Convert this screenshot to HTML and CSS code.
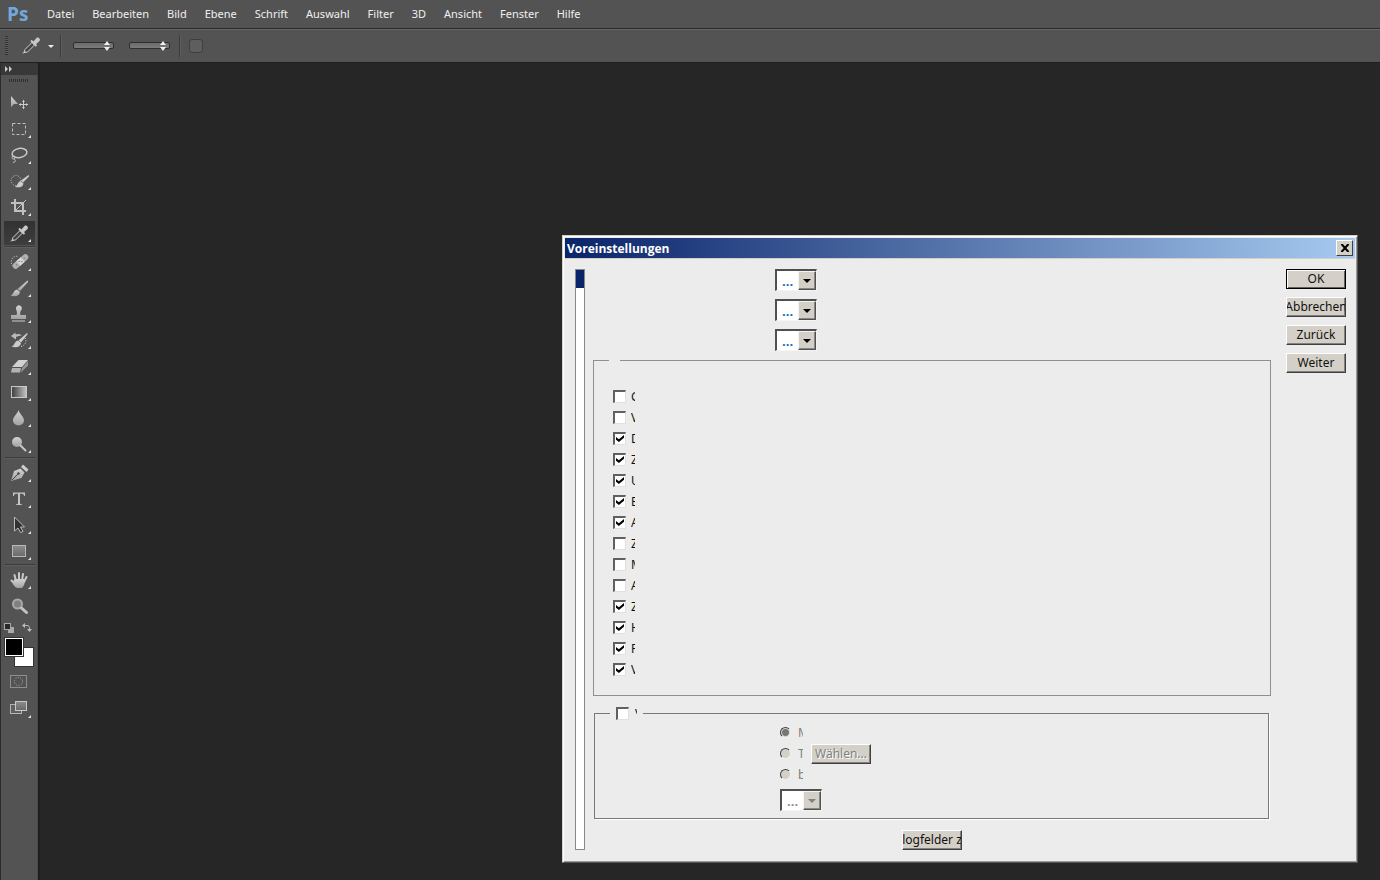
FILE: index.html
```html
<!DOCTYPE html>
<html lang="de">
<head>
<meta charset="utf-8">
<title>Voreinstellungen</title>
<link rel="stylesheet" href="styles.css">
</head>
<body>
<svg class="defs" aria-hidden="true">
  <defs>
    <linearGradient id="metal" x1="0" y1="0" x2="0" y2="1"><stop offset="0" stop-color="#d2d2d2"/><stop offset="1" stop-color="#a2a2a2"/></linearGradient>
    <linearGradient id="ramp"><stop offset="0" stop-color="#3c3c3c"/><stop offset="1" stop-color="#c4c4c4"/></linearGradient>
    <linearGradient id="plate" x1="0" y1="0" x2="0" y2="1"><stop offset="0" stop-color="#8c8c8c"/><stop offset="1" stop-color="#6a6a6a"/></linearGradient>
    <path id="corner" d="M29 19v3h-3z" fill="#e4e4e4"/>
    <g id="dropper">
      <path d="M10 20.500l1-3 7-7 2.500 2.500-7 7z" fill="#444" stroke="#d0d0d0"/>
      <path d="M17 8.500l5.500 5.500" stroke="#c8c8c8" stroke-width="2"/>
      <path d="M18.500 10.500l4-4.500c1.500-1.500 4.500 1 3 3l-4.500 4z" fill="#c8c8c8"/>
      <path d="M9 21.500l2-2" stroke="#ddd"/>
    </g>
    <g id="brush">
      <path d="M25.500 5.500c1 .8.500 1.500 0 2l-7.500 8.500-2.500-2z" fill="url(#metal)"/>
      <path d="M15 14.500l3 2.500c-.5 4-5 5-9.500 3.500 3-.5 3-5.500 6.500-6z" fill="url(#metal)"/>
    </g>
  </defs>
</svg>

<header class="menubar">
  <span class="logo">Ps</span>
  <nav class="menus">
    <button>Datei</button><button>Bearbeiten</button><button>Bild</button><button>Ebene</button><button>Schrift</button><button>Auswahl</button><button>Filter</button><button>3D</button><button>Ansicht</button><button>Fenster</button><button>Hilfe</button>
  </nav>
</header>

<div class="options">
  <span class="grip"></span>
  <button class="preset" aria-label="Pipette">
    <svg width="36" height="26" viewBox="0 0 36 26"><use href="#dropper" transform="translate(-5 -1)"/><path d="M29 12h6l-3 3z" fill="#eee"/></svg>
  </button>
  <span class="divider"></span>
  <span class="slot"><select aria-label="Aufnahmebereich"><option></option></select><svg width="6" height="10" viewBox="0 0 6 10"><path d="M0 4l3-4 3 4zM0 6l3 4 3-4z" fill="#eee"/></svg></span>
  <span class="slot"><select aria-label="Aufnehmen"><option></option></select><svg width="6" height="10" viewBox="0 0 6 10"><path d="M0 4l3-4 3 4zM0 6l3 4 3-4z" fill="#eee"/></svg></span>
  <span class="divider"></span>
  <input class="ring" type="checkbox" aria-label="Auswahlring anzeigen">
</div>

<div class="workspace">
  <aside class="tools">
    <button class="collapse" aria-label="Erweitern"><svg width="10" height="6" viewBox="0 0 10 6"><path d="M1 0l3 3-3 3zM5 0l3 3-3 3z" fill="#ccc"/></svg></button>
    <div class="toolgrip"></div>

    <button class="tool" aria-label="Verschieben"><svg viewBox="0 0 36 26"><path d="M9 6v11l3-3h4z" fill="url(#metal)"/><path d="M21.500 10v9M17 14.500h9" stroke="#ccc"/><path d="M21.500 10l1.500 2h-3zM21.500 19l1.500-2h-3zM17 14.500l2-1.500v3zM26 14.500l-2-1.500v3z" fill="#ccc"/></svg></button>
    <button class="tool" aria-label="Auswahlrechteck"><svg viewBox="0 0 36 26"><rect x="10.500" y="7.500" width="13" height="11" fill="none" stroke="#c0c0c0" stroke-dasharray="3 2"/><use href="#corner"/></svg></button>
    <button class="tool" aria-label="Lasso"><svg viewBox="0 0 36 26" fill="none" stroke="#c8c8c8"><ellipse cx="17.500" cy="11" rx="7.500" ry="4.500" stroke-width="1.500" transform="rotate(-10 17.500 11)"/><circle cx="11.500" cy="15.500" r="1.500"/><path d="M12 17c2 1 2 3-1 3.500"/><use href="#corner" stroke="none"/></svg></button>
    <button class="tool" aria-label="Schnellauswahl"><svg viewBox="0 0 36 26"><circle cx="14" cy="12.500" r="5" fill="none" stroke="#d0d0d0" stroke-dasharray="1 1.500"/><path d="M26.500 7c1 .8.500 1.500 0 2l-5.500 5.500-2-2z" fill="#ccc"/><path d="M18.500 13l3 2.500c-.5 3.500-4 4.500-9 3.500 3-.5 3-5 6-6z" fill="#ccc"/><use href="#corner"/></svg></button>
    <button class="tool" aria-label="Freistellen"><svg viewBox="0 0 36 26" fill="none"><path d="M13 5v12h11M9 9h12v12" stroke="#c0c0c0" stroke-width="2"/><path d="M14 16l10-10" stroke="#c0c0c0"/><use href="#corner"/></svg></button>
    <button class="tool active" aria-label="Pipette"><svg viewBox="0 0 36 26"><use href="#dropper"/><use href="#corner"/></svg></button>
    <hr>
    <button class="tool" aria-label="Bereichsreparatur"><svg viewBox="0 0 36 26"><path d="M13 18.500a5 5.500 0 1 1 3-11" fill="none" stroke="#e0e0e0" stroke-dasharray="1 1.500"/><g transform="rotate(-42 18.500 12.500)"><rect x="9" y="9.500" width="19" height="6" rx="3" fill="#b0b0b0"/><rect x="15.500" y="9.500" width="6" height="6" fill="#d8d8d8"/><path d="M17 11h1v1h-1zm2 2h1v1h-1zm-6-1h1v1h-1zm10 0h1v1h-1z" fill="#555"/></g><use href="#corner"/></svg></button>
    <button class="tool" aria-label="Pinsel"><svg viewBox="0 0 36 26"><use href="#brush"/><use href="#corner"/></svg></button>
    <button class="tool" aria-label="Kopierstempel"><svg viewBox="0 0 36 26"><path d="M14 8a3 3 0 1 1 5 1.500c-1 1-1 3.500-.5 4.500H24v4H9v-4h5.500c.7-1 .5-3.500 0-4.500z" fill="url(#metal)"/><path d="M10 20h13" stroke="#ccc"/><use href="#corner"/></svg></button>
    <button class="tool" aria-label="Protokollpinsel"><svg viewBox="0 0 36 26"><path d="M25 6c1 .8.500 1.500 0 2l-6 7.500-2.500-2z" fill="#ccc"/><path d="M16 13.500l3 2.500c-.5 4-5 5-9.500 3.500 3-.5 3-5.500 6.500-6z" fill="#ccc"/><path d="M9 9l4.500-3.500v2c3-1 5-.5 6.500 1-2-.2-4 .3-6 1.500v2.500z" fill="#bbb"/><path d="M23 11c2 3 1 7-4 8.500" fill="none" stroke="#ddd" stroke-dasharray="1 1.500"/><use href="#corner"/></svg></button>
    <button class="tool" aria-label="Radiergummi"><svg viewBox="0 0 36 26"><path d="M10 14l6.500-7H26l-6 7z" fill="#d2d2d2"/><path d="M10 15h9l-1 4.500H9z" fill="#b2b2b2"/><path d="M20 15l6-7v4.500l-7 7z" fill="#949494"/><use href="#corner"/></svg></button>
    <button class="tool" aria-label="Verlauf"><svg viewBox="0 0 36 26"><rect x="9.500" y="7.500" width="15" height="11" fill="url(#ramp)" stroke="#c8c8c8"/><use href="#corner"/></svg></button>
    <button class="tool" aria-label="Weichzeichner"><svg viewBox="0 0 36 26"><path d="M16.500 5c1 4 5.500 6.500 5.500 10.500a5.500 5 0 0 1-11 0c0-4 4.500-6.500 5.500-10.500z" fill="url(#metal)"/><use href="#corner"/></svg></button>
    <button class="tool" aria-label="Abwedler"><svg viewBox="0 0 36 26"><circle cx="15" cy="11" r="5" fill="url(#metal)"/><path d="M18.500 14.500l5 5" stroke="#c8c8c8" stroke-width="2" stroke-linecap="round"/><use href="#corner"/></svg></button>
    <hr>
    <button class="tool" aria-label="Zeichenstift"><svg viewBox="0 0 36 26"><path d="M9 21l3-10 6.500-2.500 4 4-3 5.500z" fill="url(#metal)"/><path d="M10 20l6-6" stroke="#444"/><circle cx="16.500" cy="13.500" r="1.200" fill="#444"/><path d="M19 7l2-2.500 5.500 5-2 2.500z" fill="#ccc"/><use href="#corner"/></svg></button>
    <button class="tool" aria-label="Text"><svg viewBox="0 0 36 26"><path d="M11 6.500h12v3.500h-.8c-.4-1.800-1-2.300-3-2.300h-1.200V17c0 1 .5 1.200 2 1.300v.7h-6v-.7c1.500-.1 2-.3 2-1.300V7.700h-1.200c-2 0-2.600.5-3 2.300H11z" fill="#c4c4c4"/><use href="#corner"/></svg></button>
    <button class="tool" aria-label="Pfadauswahl"><svg viewBox="0 0 36 26"><path d="M12.500 5v14l3.500-3 2.500 4.500 2.500-1-2.500-4.500h4z" fill="#303030" stroke="#bbb"/><use href="#corner"/></svg></button>
    <button class="tool" aria-label="Rechteck"><svg viewBox="0 0 36 26"><rect x="10.500" y="7.500" width="13" height="11" fill="url(#plate)" stroke="#b8b8b8"/><use href="#corner"/></svg></button>
    <hr>
    <button class="tool" aria-label="Hand"><svg viewBox="0 0 36 26"><g stroke="#c8c8c8" stroke-width="2" stroke-linecap="round" fill="none"><path d="M14 14l-1.500-6M17 13V6M20 14l1-7M22 15l2.500-5M13 17l-3.500-3.500"/></g><path d="M12.500 12h10v4c0 2-2 5-3 5h-4c-2 0-4-3-5-5z" fill="url(#metal)"/><use href="#corner"/></svg></button>
    <button class="tool" aria-label="Zoom"><svg viewBox="0 0 36 26"><circle cx="15.500" cy="11" r="4.500" fill="#808080" stroke="#a8a8a8" stroke-width="2"/><path d="M19.500 15l5 4.500" stroke="#c4c4c4" stroke-width="3" stroke-linecap="round"/></svg></button>
    <div class="colors">
      <div class="minis">
        <button aria-label="Standardfarben"><svg width="12" height="12" viewBox="0 0 12 12"><path d="M5 5h6v6H5z" fill="#aaa"/><rect x="1.500" y="1.500" width="6" height="6" fill="#292929" stroke="#aaa"/></svg></button>
        <button aria-label="Farben vertauschen"><svg width="12" height="12" viewBox="0 0 12 12"><path d="M3 3.500h3c2 0 2.500 1 2.500 4" fill="none" stroke="#bbb"/><path d="M4 1v5L1 3.500zM6 7h5l-2.500 3z" fill="#bbb"/></svg></button>
      </div>
      <svg class="swatches" width="36" height="32" viewBox="0 0 36 32"><path d="M12 11h20v20H12z" fill="#333"/><path d="M13 12h18v18H13z" fill="#fff"/><path d="M2 1h20v20H2z" fill="#333"/><path d="M3 2h18v18H3z" fill="#fff"/><path d="M4 3h16v16H4z"/></svg>
    </div>
    <button class="tool" aria-label="Maskierungsmodus"><svg viewBox="0 0 36 26"><rect x="8.500" y="7.500" width="16" height="12" fill="none" stroke="#8e8e8e"/><circle cx="16.500" cy="13.500" r="4" fill="none" stroke="#aaa" stroke-dasharray="1 1.500"/></svg></button>
    <button class="tool screen" aria-label="Bildschirmmodus"><svg viewBox="0 0 36 26"><rect x="8.500" y="8.500" width="11" height="9" fill="#606060" stroke="#b4b4b4"/><rect x="13.500" y="5.500" width="11" height="9" fill="url(#plate)" stroke="#c8c8c8"/><use href="#corner"/></svg></button>
  </aside>

  <main class="canvas"></main>
</div>

<section class="dialog" role="dialog" aria-labelledby="dlg-title">
  <header class="titlebar">
    <h1 id="dlg-title">Voreinstellungen</h1>
    <button class="close" aria-label="Schließen"><svg width="10" height="8" viewBox="0 0 10 8"><path d="M1.500 0l7 8M8.500 0l-7 8" stroke="#000" stroke-width="2"/></svg></button>
  </header>
  <div class="body">
    <div class="list"><div class="picked"></div></div>
    <form class="main">
      <div class="pickers">
        <span class="combo"><select aria-label="Farbwähler"><option>...</option></select><span class="arrow"></span></span>
        <span class="combo"><select aria-label="HUD-Farbwähler"><option>...</option></select><span class="arrow"></span></span>
        <span class="combo"><select aria-label="Bildinterpolation"><option>...</option></select><span class="arrow"></span></span>
      </div>
      <fieldset class="group">
        <legend></legend>
        <label class="check"><input type="checkbox"><span>G</span></label>
        <label class="check"><input type="checkbox"><span>V</span></label>
        <label class="check"><input type="checkbox" checked><span>D</span></label>
        <label class="check"><input type="checkbox" checked><span>Z</span></label>
        <label class="check"><input type="checkbox" checked><span>U</span></label>
        <label class="check"><input type="checkbox" checked><span>B</span></label>
        <label class="check"><input type="checkbox" checked><span>A</span></label>
        <label class="check"><input type="checkbox"><span>Z</span></label>
        <label class="check"><input type="checkbox"><span>M</span></label>
        <label class="check"><input type="checkbox"><span>A</span></label>
        <label class="check"><input type="checkbox" checked><span>Z</span></label>
        <label class="check"><input type="checkbox" checked><span>H</span></label>
        <label class="check"><input type="checkbox" checked><span>F</span></label>
        <label class="check"><input type="checkbox" checked><span>V</span></label>
      </fieldset>
      <fieldset class="history">
        <legend><label class="check"><input type="checkbox"><span>V</span></label></legend>
        <div class="radiorow"><label class="radio"><input type="radio" name="log" checked disabled><span>M</span></label></div>
        <div class="radiorow"><label class="radio"><input type="radio" name="log" disabled><span>T</span></label><button type="button" class="push" disabled>Wählen...</button></div>
        <div class="radiorow"><label class="radio"><input type="radio" name="log" disabled><span>b</span></label></div>
        <span class="combo off"><select aria-label="Protokolleinträge" disabled><option>...</option></select><span class="arrow"></span></span>
      </fieldset>
      <button type="button" class="push reset"><span>logfelder z</span></button>
    </form>
    <div class="actions">
      <button class="push default">OK</button>
      <button class="push">Abbrechen</button>
      <button class="push">Zurück</button>
      <button class="push">Weiter</button>
    </div>
  </div>
</section>
</body>
</html>
```
FILE: styles.css
```css
* { box-sizing: border-box; }
html, body { height: 100%; }
body {
  margin: 0;
  display: flex;
  flex-direction: column;
  overflow: hidden;
  background: #262626;
  color: #f0f0f0;
  font: 12px/16px "Noto Sans", "Open Sans", sans-serif;
}
button, select, input { font: inherit; margin: 0; }
button { padding: 0; border: 0; background: none; color: inherit; }
svg { display: block; }
.defs { position: absolute; width: 0; height: 0; }

.menubar {
  display: flex;
  align-items: center;
  height: 28px;
  padding-left: 7px;
  background: #535353;
}
.logo { width: 40px; font: bold 19px/26px "Open Sans", sans-serif; color: #74a8dc; }
.menus { display: flex; gap: 18px; font-size: 11px; }

.options {
  display: flex;
  align-items: center;
  height: 35px;
  padding-left: 5px;
  background: #535353;
  border-top: 1px solid #2a2a2a;
  border-bottom: 1px solid #1e1e1e;
  box-shadow: inset 0 1px #666;
}
.grip {
  width: 3px;
  height: 19px;
  background: repeating-linear-gradient(#333 0 1px, #5c5c5c 1px 2px);
}
.preset { margin-left: 11px; }
.divider { width: 1px; height: 22px; margin-left: 5px; background: #3a3a3a; box-shadow: 1px 0 #5e5e5e; }
.slot { position: relative; margin-left: 12px; }
.slot + .slot { margin-left: 15px; }
.slot select {
  display: block;
  appearance: none;
  width: 41px;
  height: 7px;
  padding: 0;
  border: 1px solid #303030;
  border-radius: 2px;
  background: linear-gradient(#6a6a6a, #7c7c7c);
}
.slot svg { position: absolute; right: 4px; top: -1px; pointer-events: none; }
.slot + .divider { margin-left: 9px; }
.ring {
  appearance: none;
  width: 14px;
  height: 14px;
  margin-left: 9px;
  border: 1px solid #3e3e3e;
  border-radius: 3px;
  background: #5e5e5e;
}

.workspace { flex: 1; display: flex; min-height: 0; }
.tools {
  display: flex;
  flex-direction: column;
  width: 40px;
  padding-left: 1px;
  background: #535353;
  border-left: 1px solid #2c2c2c;
  border-right: 2px solid #1f1f1f;
  box-shadow: inset -1px 0 #484848;
}
.collapse { display: flex; align-items: center; height: 12px; margin-left: -1px; padding-left: 3px; background: #383838; }
.toolgrip {
  width: 20px;
  height: 3px;
  margin: 4px 0 8px 7px;
  background: repeating-linear-gradient(90deg, #303030 0 1px, #535353 1px 2px);
}
.tool { width: 36px; height: 26px; }
.tool svg { width: 36px; height: 26px; }
.tool.active { border-radius: 3px; background: linear-gradient(#323232, #3e3e3e) no-repeat 2px 1px / 31px 24px; }
.tool.screen { margin-top: 2px; }
.tools hr { width: 30px; height: 2px; margin: 0 0 1px 3px; border: 0; background: #3a3a3a; border-bottom: 1px solid #5e5e5e; }
.colors { display: flex; flex-direction: column; height: 49px; }
.minis { display: flex; gap: 6px; height: 17px; padding-left: 1px; }
.minis svg { width: 12px; height: 12px; }

.dialog {
  position: absolute;
  left: 562px;
  top: 235px;
  width: 796px;
  border: 1px solid;
  border-color: #d4d0c8 #555 #555 #d4d0c8;
  padding: 2px;
  background: #ececec;
  box-shadow: inset 1px 1px #fff, inset -1px -1px #999;
  color: #111;
}
.titlebar {
  display: flex;
  align-items: center;
  justify-content: space-between;
  height: 20px;
  padding: 0 2px;
  background: linear-gradient(90deg, #0a246a, #a6caf0);
}
.titlebar h1 { margin: 0; font: bold 12px/18px "Open Sans", sans-serif; padding-top: 2px; color: #fff; }
.close {
  display: flex;
  align-items: center;
  justify-content: center;
  width: 17px;
  height: 16px;
  background: #d4d0c8;
  border: 1px solid;
  border-color: #fff #404040 #404040 #fff;
}
.body { display: flex; padding: 10px 9px; border-top: 1px solid #d4d0c8; }
.list { width: 10px; margin-left: 1px; background: #fff; border: 1px solid #888; }
.picked { height: 18px; background: #0a246a; }
.main { flex: 1; display: flex; flex-direction: column; margin: 0 15px 0 8px; }
.pickers { display: flex; flex-direction: column; gap: 8px; margin-left: 182px; }

.combo { position: relative; display: block; width: 42px; height: 22px; }
.combo select {
  appearance: none;
  display: block;
  width: 100%;
  height: 100%;
  padding: 0 0 0 5px;
  background: #fff;
  border: 2px solid;
  border-color: #505050 #888 #888 #505050;
  border-width: 2px 1px 1px 2px;
  outline: 1px solid #f8f8f8;
  outline-offset: -1px;
  border-radius: 0;
  color: #1568b8;
  font: bold 13px/18px "Open Sans", sans-serif;
}
.combo select {
  outline: 0;
  border-color: #505050 #f4f4f4 #f4f4f4 #505050;
}
.arrow {
  position: absolute;
  right: 1px;
  top: 2px;
  width: 18px;
  height: 19px;
  background: #d4d0c8;
  border: 1px solid;
  border-color: #f4f4f4 #505050 #505050 #f4f4f4;
  box-shadow: inset -1px -1px #888;
  pointer-events: none;
}
.arrow::after {
  content: "";
  display: block;
  margin: 7px 0 0 4px;
  width: 0;
  border: 4px solid transparent;
  border-top-color: #000;
  border-bottom: 0;
}
.off .arrow::after { border-top-color: #808080; }
.combo.off select { color: #909090; opacity: 1; }

fieldset { min-width: 0; border: 1px solid #909090; }
.group { margin: 9px 0 0; padding: 25px 19px 15px; }
.group legend { width: 11px; height: 0; padding: 0; margin-left: -4px; }
.check { display: flex; align-items: center; height: 21px; width: 22px; }
.check input {
  appearance: none;
  flex: none;
  width: 13px;
  height: 13px;
  background: #fff;
  border: 2px solid;
  border-color: #606060 #e0e0e0 #e0e0e0 #606060;
  border-width: 2px 1px 1px 2px;
}
.check input:checked::after {
  content: "";
  display: block;
  width: 8px;
  height: 7px;
  margin: 1px;
  background: #000;
  clip-path: polygon(0 30%, 36% 60%, 100% 0, 100% 38%, 36% 100%, 0 68%);
}
.check span { width: 4px; margin-left: 5px; overflow: hidden; }

.history {
  margin: 10px 2px 0 1px;
  padding: 2px 20px 7px 185px;
  border-color: #787878;
  box-shadow: 1px 1px #fff;
}
.history legend { margin-left: -170px; padding: 0 0 0 6px; width: 33px; background: #ececec; }
.history legend .check { height: 14px; width: 27px; }
.history legend span { width: 2px; height: 5px; margin: 0 0 4px 6px; line-height: 10px; }
.radiorow { display: flex; align-items: center; height: 21px; }
.radio { display: flex; align-items: center; width: 31px; color: #808080; }
.radio input {
  appearance: none;
  flex: none;
  width: 11px;
  height: 11px;
  border: 1px solid;
  border-color: #404040 #f0f0f0 #f0f0f0 #404040;
  border-radius: 50%;
  background: #d4d0c8;
}
.radio input:checked { background: radial-gradient(circle, #777 0 3px, #d4d0c8 4px); }
.radio span { width: 5px; margin-left: 7px; overflow: hidden; }
.history .combo { margin-top: 4px; }

.push {
  display: flex;
  align-items: center;
  justify-content: center;
  width: 60px;
  height: 20px;
  overflow: hidden;
  background: #d4d0c8;
  border: 1px solid;
  border-color: #fff #404040 #404040 #fff;
  box-shadow: inset -1px -1px #808080;
  color: #111;
  white-space: nowrap;
}
.push:disabled { color: #808080; text-shadow: 1px 1px #fff; }
.push.default { border-color: #000; box-shadow: inset 1px 1px #fff, inset -1px -1px #606060; }
.reset { align-self: center; margin-top: 11px; }
.actions { display: flex; flex-direction: column; gap: 8px; width: 60px; }
```
